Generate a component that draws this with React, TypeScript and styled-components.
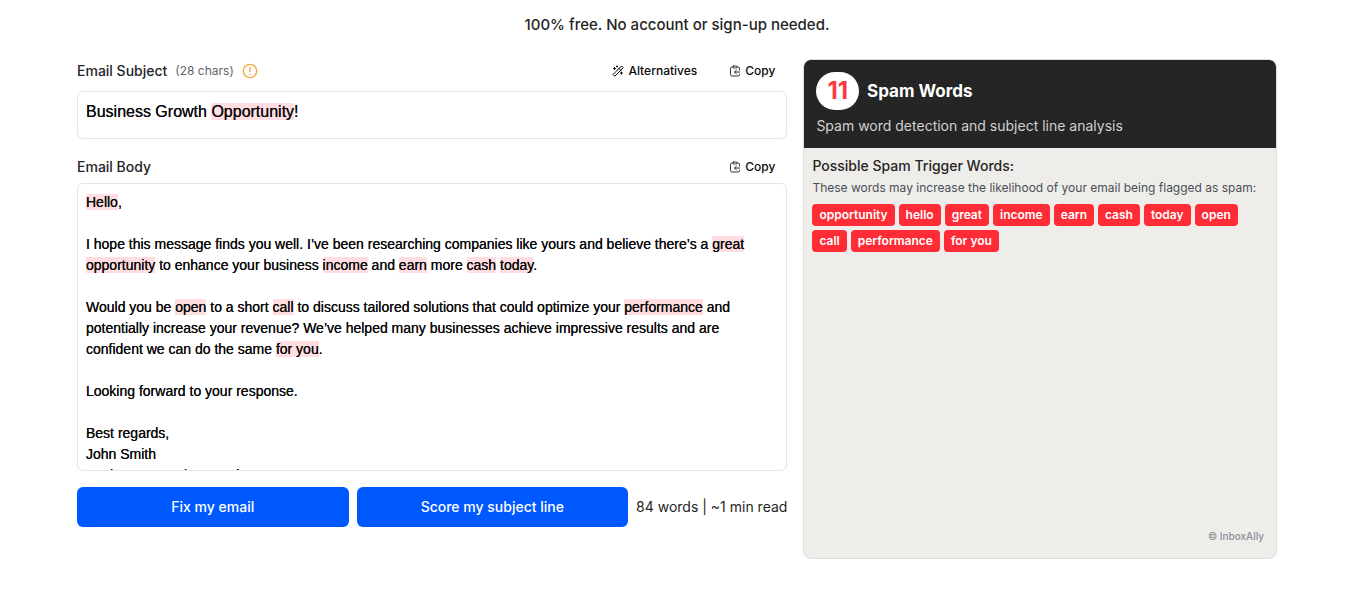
import React, { useRef, useState } from "react";
import styled, { createGlobalStyle } from "styled-components";

const GlobalStyle = createGlobalStyle`
  *, *::before, *::after { box-sizing: border-box; }
  body {
    margin: 0;
    background: #fff;
    color: #252525;
    font-family: Inter, "Liberation Sans", sans-serif;
    font-size: 14px;
  }
`;

const Page = styled.main`
  max-width: 1201px;
  margin: 0 auto;
  padding: 13px 1px 40px 0;
`;

const Tagline = styled.p`
  margin: 0 0 22px;
  font-size: 15px;
  font-weight: 500;
  line-height: 24px;
  text-align: center;
`;

const Columns = styled.div`
  display: grid;
  grid-template-columns: minmax(0, 3fr) minmax(0, 2fr);
  gap: 16px;
`;

const Editor = styled.form`
  display: flex;
  flex-direction: column;
`;

const FieldHeader = styled.div`
  display: flex;
  align-items: center;
  gap: 8px;
  height: 24px;
`;

const FieldLabel = styled.label`
  font-size: 14px;
  font-weight: 500;
  line-height: 16px;
`;

const CharCount = styled.span`
  font-size: 12px;
  line-height: 16px;
  color: #62656b;
`;

const Tools = styled.div`
  display: flex;
  gap: 8px;
  margin-left: auto;
`;

const ToolButton = styled.button`
  display: flex;
  align-items: center;
  gap: 4px;
  height: 24px;
  padding: 0 12px;
  border: 0;
  background: transparent;
  color: #09090b;
  font: 500 12px/16px Inter, sans-serif;
  cursor: pointer;
`;

const Field = styled.div<{ $size: number; $line: number; $height: number }>`
  position: relative;
  height: ${(p) => p.$height}px;
  border: 1px solid #e2e4e8;
  border-radius: 6px;
  overflow: hidden;
  font: ${(p) => p.$size}px / ${(p) => p.$line}px "Liberation Sans", Arial, sans-serif;
  color: #0a0a0a;
`;

const Backdrop = styled.div`
  position: absolute;
  inset: 0;
  padding: 8px;
  overflow: hidden;
  color: transparent;
  white-space: pre-wrap;
  overflow-wrap: break-word;
`;

const Highlight = styled.mark`
  background: #ffdde0;
  color: inherit;
`;

const Input = styled.textarea`
  position: relative;
  display: block;
  width: 100%;
  height: 100%;
  margin: 0;
  padding: 8px;
  border: 0;
  outline: 0;
  resize: none;
  background: transparent;
  color: inherit;
  font: inherit;
  text-shadow: 0 0 0 currentColor;
  scrollbar-width: none;
`;

const Actions = styled.div`
  display: flex;
  align-items: center;
  gap: 8px;
  margin-top: 16px;
`;

const ActionButton = styled.button`
  flex: 1;
  height: 40px;
  border: 0;
  border-radius: 6px;
  background: #0058ff;
  color: #fff;
  font: 500 14px/16px Inter, sans-serif;
  cursor: pointer;
`;

const Stats = styled.span`
  font-size: 14px;
  line-height: 16px;
  white-space: nowrap;
`;

const Panel = styled.aside`
  display: flex;
  flex-direction: column;
  min-height: 500px;
  border: 1px solid #dcdddd;
  border-radius: 8px;
  background: #eeede9;
  overflow: hidden;
`;

const PanelHeader = styled.header`
  padding: 12px;
  background: #252525;
`;

const PanelTitle = styled.h2`
  display: flex;
  align-items: center;
  gap: 8px;
  margin: 0;
  color: #fff;
  font-size: 17px;
  font-weight: 700;
`;

const Count = styled.span`
  padding: 0 11px;
  border-radius: 19px;
  background: #fff;
  color: #fb3b42;
  font-size: 24px;
  font-weight: 700;
  line-height: 38px;
`;

const PanelNote = styled.p`
  margin: 6px 0 0;
  color: #d1d1d1;
  font-size: 14px;
  line-height: 20px;
`;

const PanelBody = styled.section`
  padding: 8px;
`;

const TriggerTitle = styled.h3`
  margin: 0;
  font-size: 14px;
  font-weight: 500;
  line-height: 20px;
`;

const TriggerNote = styled.p`
  margin: 4px 0 8px;
  color: #4a4f58;
  font-size: 12px;
  line-height: 16px;
`;

const Tags = styled.ul`
  display: flex;
  flex-wrap: wrap;
  gap: 4px;
  margin: 0;
  padding: 0;
  list-style: none;
`;

const Tag = styled.li`
  padding: 0 7px;
  border-radius: 4px;
  background: #fd2c36;
  color: #fff;
  font-size: 12px;
  font-weight: 600;
  line-height: 22px;
`;

const Credit = styled.footer`
  margin-top: auto;
  padding: 14px 12px;
  color: #8b8f99;
  font-size: 10px;
  font-weight: 500;
  line-height: 16px;
  text-align: right;
`;

const strokeProps = {
  fill: "none",
  stroke: "currentColor",
  strokeLinecap: "round" as const,
  strokeLinejoin: "round" as const,
};

const WandIcon = () => (
  <svg width="12" height="12" viewBox="0 0 24 24" strokeWidth="2" {...strokeProps} aria-hidden="true">
    <path d="M22 5 19 2 2 19l3 3zM14 7l3 3" />
    <path d="M5 5v4M3 7h4M19 14v4M17 16h4M10 2v2M9 3h2" />
  </svg>
);

const PasteIcon = () => (
  <svg width="12" height="12" viewBox="0 0 24 24" strokeWidth="2" {...strokeProps} stroke="#333" aria-hidden="true">
    <rect x="8" y="2" width="8" height="4" rx="1" />
    <path d="M8 4H6a3 3 0 0 0-3 3v12a3 3 0 0 0 3 3h12a3 3 0 0 0 3-3v-1M16 4h2a3 3 0 0 1 3 3v3" />
    <path d="M21 14H11M15 10l-4 4 4 4" />
  </svg>
);

const WarningIcon = () => (
  <svg width="16" height="16" viewBox="0 0 24 24" strokeWidth="2" {...strokeProps} stroke="#f2a93b" role="img" aria-label="Warning">
    <circle cx="12" cy="12" r="10" />
    <path d="M12 7v6M12 16.500v.1" />
  </svg>
);

const SPAM_WORDS = [
  "opportunity", "hello", "great", "income", "earn", "cash", "today", "open",
  "call", "performance", "for you",
];

const SUBJECT = "Business Growth Opportunity!";

const BODY = `Hello,

I hope this message finds you well. I’ve been researching companies like yours and believe there’s a great opportunity to enhance your business income and earn more cash today.

Would you be open to a short call to discuss tailored solutions that could optimize your performance and potentially increase your revenue? We’ve helped many businesses achieve impressive results and are confident we can do the same for you.

Looking forward to your response.

Best regards,
John Smith
Business Growth Consultant`;

const spamPattern = new RegExp(`\\b(${SPAM_WORDS.join("|")})\\b`, "gi");

type FieldProps = {
  id: string;
  value: string;
  onChange: (value: string) => void;
  size: number;
  line: number;
  height: number;
};

function HighlightField({ id, value, onChange, size, line, height }: FieldProps) {
  const backdrop = useRef<HTMLDivElement>(null);
  return (
    <Field $size={size} $line={line} $height={height}>
      <Backdrop ref={backdrop} aria-hidden="true">
        {value.split(spamPattern).map((part, i) =>
          i % 2 ? <Highlight key={i}>{part}</Highlight> : part
        )}
      </Backdrop>
      <Input
        id={id}
        value={value}
        spellCheck={false}
        onChange={(e) => onChange(e.target.value)}
        onScroll={(e) => {
          if (backdrop.current) backdrop.current.scrollTop = e.currentTarget.scrollTop;
        }}
      />
    </Field>
  );
}

const BodyHeader = styled(FieldHeader)`
  margin-top: 16px;
`;

const FieldGroup = styled.div<{ $gap: number }>`
  display: flex;
  flex-direction: column;
  gap: ${(p) => p.$gap}px;
`;

export default function App() {
  const [subject, setSubject] = useState(SUBJECT);
  const [body, setBody] = useState(BODY);
  const words = `${subject} ${body}`.split(/\s+/).filter(Boolean).length;
  const copy = (text: string) => navigator.clipboard?.writeText(text);

  return (
    <>
      <GlobalStyle />
      <Page>
        <Tagline>100% free. No account or sign-up needed.</Tagline>
        <Columns>
          <Editor onSubmit={(e) => e.preventDefault()}>
            <FieldGroup $gap={8}>
              <FieldHeader>
                <FieldLabel htmlFor="subject">Email Subject</FieldLabel>
                <CharCount>({subject.length} chars)</CharCount>
                <WarningIcon />
                <Tools>
                  <ToolButton type="button"><WandIcon />Alternatives</ToolButton>
                  <ToolButton type="button" onClick={() => copy(subject)}><PasteIcon />Copy</ToolButton>
                </Tools>
              </FieldHeader>
              <HighlightField id="subject" value={subject} onChange={setSubject} size={16} line={24} height={48} />
            </FieldGroup>
            <FieldGroup $gap={4}>
              <BodyHeader>
                <FieldLabel htmlFor="body">Email Body</FieldLabel>
                <Tools>
                  <ToolButton type="button" onClick={() => copy(body)}><PasteIcon />Copy</ToolButton>
                </Tools>
              </BodyHeader>
              <HighlightField id="body" value={body} onChange={setBody} size={14} line={21} height={288} />
            </FieldGroup>
            <Actions>
              <ActionButton type="submit">Fix my email</ActionButton>
              <ActionButton type="button">Score my subject line</ActionButton>
              <Stats>{words} words | ~1 min read</Stats>
            </Actions>
          </Editor>
          <Panel>
            <PanelHeader>
              <PanelTitle><Count>{SPAM_WORDS.length}</Count>Spam Words</PanelTitle>
              <PanelNote>Spam word detection and subject line analysis</PanelNote>
            </PanelHeader>
            <PanelBody>
              <TriggerTitle>Possible Spam Trigger Words:</TriggerTitle>
              <TriggerNote>These words may increase the likelihood of your email being flagged as spam:</TriggerNote>
              <Tags>
                {SPAM_WORDS.map((word) => <Tag key={word}>{word}</Tag>)}
              </Tags>
            </PanelBody>
            <Credit>© InboxAlly</Credit>
          </Panel>
        </Columns>
      </Page>
    </>
  );
}
